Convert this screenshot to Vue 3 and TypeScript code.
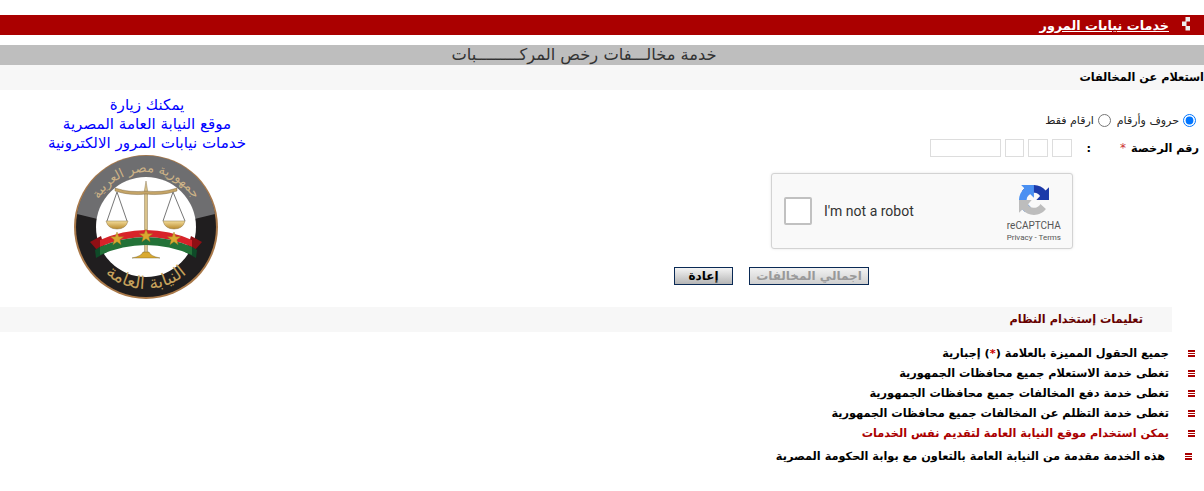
<script setup lang="ts">
interface Note {
  text: string
  red?: boolean
}

const notes: Note[] = [
  { text: 'تغطى خدمة الاستعلام جميع محافظات الجمهورية' },
  { text: 'تغطى خدمة دفع المخالفات جميع محافظات الجمهورية' },
  { text: 'تغطى خدمة التظلم عن المخالفات جميع محافظات الجمهورية' },
  { text: 'يمكن استخدام موقع النيابة العامة لتقديم نفس الخدمات', red: true },
]

// right to left, as the boxes stand on the page
const plateBoxes = [20, 20, 19, 71]
</script>

<template>
  <div class="page">
    <header class="topbar">
      <svg class="topbar-icon" width="8" height="14" viewBox="0 0 8 14">
        <path d="M3.500 0H8v4.500H3.500zM0 4.500h4.500V9H0zM3.500 9H8v4.500H3.500z" fill="#eee" />
      </svg>
      <a class="topbar-link">خدمات نيابات المرور</a>
    </header>

    <h1 class="title">خدمة مخالـــفات رخص المركـــــــــبات</h1>
    <h2 class="subtitle">استعلام عن المخالفات</h2>

    <main class="content">
      <section class="form">
        <div class="radios">
          <label class="radio"><input type="radio" name="kind" checked />حروف وأرقام</label>
          <label class="radio"><input type="radio" name="kind" />ارقام فقط</label>
        </div>

        <div class="plate">
          <span class="plate-label">رقم الرخصة</span>
          <span class="star">*</span>
          <span class="colon">:</span>
          <div class="plate-inputs">
            <input v-for="(w, i) in plateBoxes" :key="i" class="plate-input" :style="{ width: w + 'px' }" />
          </div>
        </div>

        <div class="captcha">
          <span class="captcha-check"></span>
          <span class="captcha-text">I'm not a robot</span>
          <div class="captcha-brand">
            <svg width="30" height="30" viewBox="0 0 64 64">
              <path d="M64 32l-.03-1.400V4.700l-7.160 7.160C50.950 4.670 42 .1 32.050.1 21.650.1 12.430 5.050 6.590 12.730l11.740 11.860a15.550 15.550 0 0 1 4.750-5.330c2.050-1.600 4.950-2.910 8.970-2.910.480 0 .86.060 1.130.160 4.980.390 9.290 3.140 11.830 7.120L37 32z" fill="#1c3aa9" />
              <path d="M31.860.1l-1.370.03H4.590l7.160 7.160C4.580 13.150 0 22.060 0 32.050c0 10.400 4.960 19.620 12.640 25.460l11.860-11.740a15.550 15.550 0 0 1-5.330-4.750c-1.600-2.050-2.910-4.950-2.910-8.970 0-.480.060-.860.160-1.130.390-4.980 3.140-9.290 7.120-11.830l8.310 8.310z" fill="#4a90f2" />
              <path d="M0 32l.03 1.400v25.900l7.160-7.160c5.860 7.170 14.770 11.750 24.760 11.750 10.400 0 19.620-4.960 25.460-12.640L45.670 40.400a15.550 15.550 0 0 1-4.750 5.330c-2.050 1.600-4.950 2.910-8.970 2.910-.480 0-.860-.060-1.130-.160-4.980-.390-9.290-3.140-11.830-7.120L27 32z" fill="#bdbdbd" />
            </svg>
            <span class="captcha-name">reCAPTCHA</span>
            <span class="captcha-links">Privacy - Terms</span>
          </div>
        </div>

        <div class="actions">
          <button class="btn btn-off" disabled>اجمالي المخالفات</button>
          <button class="btn">إعادة</button>
        </div>
      </section>

      <aside class="visit">
        <a>يمكنك زيارة</a>
        <a>موقع النيابة العامة المصرية</a>
        <a>خدمات نيابات المرور الالكترونية</a>
        <svg class="seal" width="146" height="146" viewBox="0 0 146 146">
          <defs>
            <path id="arc-top" d="M18 73a55 55 0 0 1 110 0" />
            <path id="arc-bottom" d="M11 73a62 62 0 0 0 124 0" />
            <linearGradient id="gold" x1="0" x2="0" y1="0" y2="1">
              <stop offset="0" stop-color="#f3dc9a" />
              <stop offset="1" stop-color="#b98a2c" />
            </linearGradient>
            <polygon id="star" points="0,-7 1.800,-2.200 6.700,-2.200 2.800,.8 4.100,5.700 0,2.700 -4.100,5.700 -2.800,.8 -6.700,-2.200 -1.800,-2.200" fill="#d9a92f" stroke="#9a7a20" stroke-width=".4" />
          </defs>
          <circle cx="73" cy="73" r="72" fill="#a9794a" />
          <circle cx="73" cy="73" r="70" fill="#201e1f" />
          <path d="M4 60A70 70 0 0 1 142 60L121.500 65A50 50 0 0 0 24.500 65z" fill="#6e6e70" />
          <circle cx="73" cy="73" r="50" fill="#fff" />
          <text class="seal-text" fill="#cdb387" font-size="13"><textPath href="#arc-top" startOffset="50%" text-anchor="middle">جمهورية مصر العربية</textPath></text>
          <text class="seal-text" fill="#c6a15b" font-size="17.500"><textPath href="#arc-bottom" startOffset="50%" text-anchor="middle">النيابة العامة</textPath></text>

          <path d="M73 27l1.500 9v63h-3V36z" fill="#d9c28a" stroke="#7a6540" stroke-width=".4" />
          <path d="M59 104q10-2 11-6h6q1 4 11 6z" fill="#d9a92f" stroke="#6b5520" stroke-width=".4" />
          <path d="M42 34q15 5 31 3q16 2 31-3v3q-15 5-31 3q-16 2-31-3z" fill="#c4a467" stroke="#6e5a38" stroke-width=".4" />
          <path d="M44 38L34 67M44 38l10 29M100 38L90 67M100 38l12 29" stroke="#777" fill="none" />
          <path d="M33 67h22q-2 8-11 8t-11-8zM90 67h22q-2 8-11 8t-11-8z" fill="url(#gold)" stroke="#8a7446" stroke-width=".5" />

          <path d="M17 88l11-6 3 10-7 4z" fill="#8f0f14" />
          <path d="M129 88l-11-6-3 10 7 4z" fill="#8f0f14" />
          <path d="M22 96l9-6 3 8-11 6z" fill="#0f4a28" />
          <path d="M124 96l-9-6-3 8 11 6z" fill="#0f4a28" />
          <path d="M27 86Q73 66 119 86V93Q73 73 27 93z" fill="#d8232a" />
          <path d="M27 93Q73 73 119 93V101Q73 81 27 101z" fill="#237238" />
          <use href="#star" x="44" y="85" />
          <use href="#star" x="73" y="82" />
          <use href="#star" x="101" y="85" />
        </svg>
      </aside>
    </main>

    <section class="help">
      <h3 class="help-title"><span>تعليمات إستخدام النظام</span></h3>
      <ul class="notes">
        <li class="note">
          <span class="bullet"></span>
          <span>جميع الحقول المميزة بالعلامة (<b class="star-inline">*</b>) إجبارية</span>
        </li>
        <li v-for="n in notes" :key="n.text" class="note" :class="{ red: n.red }">
          <span class="bullet"></span>
          <span>{{ n.text }}</span>
        </li>
        <li class="note last">
          <span class="bullet"></span>
          <span>هذه الخدمة مقدمة من النيابة العامة بالتعاون مع بوابة الحكومة المصرية</span>
        </li>
      </ul>
    </section>
  </div>
</template>

<style>
html,
body {
  margin: 0;
  background: #fff;
}
</style>

<style scoped>
.page {
  direction: rtl;
  box-sizing: border-box;
  height: 491px;
  padding-top: 15px;
  overflow: hidden;
  font-family: "DejaVu Sans", sans-serif;
  color: #000;
}

.topbar {
  height: 20px;
  background: #a00;
  display: flex;
  align-items: center;
  gap: 13px;
  padding-right: 14px;
  color: #fff;
}

.topbar-icon {
  margin-bottom: 2px;
}

.topbar-link {
  color: #fff;
  font-size: 12.800px;
  font-weight: bold;
  text-decoration: underline;
}

.title {
  margin: 10px 0 0;
  height: 20px;
  line-height: 20px;
  background: #bebebe;
  color: #333;
  font-size: 16.300px;
  font-weight: normal;
  text-align: center;
  padding-right: 36px;
}

.subtitle {
  margin: 0;
  height: 25px;
  line-height: 25px;
  background: #f7f7f7;
  font-size: 11.300px;
  font-weight: bold;
}

.content {
  display: flex;
  justify-content: space-between;
  height: 217px;
}

.form {
  width: 540px;
}

.radios {
  display: flex;
  gap: 6px;
  height: 20px;
  margin-top: 20px;
  font-size: 11px;
  color: #222;
  padding-right: 8px;
}

.radio {
  display: flex;
  align-items: center;
  gap: 4px;
}

.radio input {
  margin: 0;
  width: 13px;
  height: 13px;
}

.plate {
  display: flex;
  align-items: center;
  height: 18px;
  margin-top: 9px;
  padding-right: 5px;
  font-size: 11.300px;
  font-weight: bold;
}

.plate-label {
  width: 73px;
  white-space: nowrap;
}

.star {
  color: #c33;
  font-size: 12px;
  font-weight: normal;
  width: 35px;
}

.colon {
  width: 19px;
}

.plate-inputs {
  display: flex;
  gap: 4px;
}

.plate-input {
  box-sizing: border-box;
  height: 18px;
  border: 1px solid #ddd;
  padding: 0;
}

.captcha {
  direction: ltr;
  box-sizing: border-box;
  width: 302px;
  height: 76px;
  margin: 16px 131px 0 0;
  border: 1px solid #d3d3d3;
  border-radius: 3px;
  background: #f9f9f9;
  box-shadow: 0 0 3px rgba(0, 0, 0, 0.1);
  display: flex;
  align-items: center;
  font-family: Roboto, sans-serif;
  padding: 0 11px 0 12px;
}

.captcha-check {
  box-sizing: border-box;
  width: 28px;
  height: 28px;
  border: 2px solid #c1c1c1;
  border-radius: 2px;
  background: #fff;
}

.captcha-text {
  margin-left: 12px;
  font-size: 14px;
  color: #333;
  flex: 1;
}

.captcha-brand {
  align-self: flex-start;
  padding-top: 11px;
  display: flex;
  flex-direction: column;
  align-items: center;
  color: #555;
}

.captcha-name {
  font-size: 10px;
  line-height: 12px;
  margin-top: 5px;
}

.captcha-links {
  font-size: 8px;
  line-height: 12px;
}

.actions {
  display: flex;
  gap: 16px;
  margin: 18px 335px 0 0;
}

.btn {
  box-sizing: border-box;
  height: 18px;
  width: 59px;
  padding: 0;
  border: 1px solid #0a2a55;
  background: linear-gradient(#f4f4f4, #b5b5b5);
  font-family: inherit;
  font-size: 12px;
  font-weight: bold;
  color: #000;
}

.btn-off {
  width: 120px;
  color: #999;
  background: linear-gradient(#f2f2f2, #cfcfcf);
}

.visit {
  width: 294px;
  padding-top: 6px;
  display: flex;
  flex-direction: column;
  align-items: center;
  font-size: 15.100px;
  line-height: 19px;
  color: #00f;
}

.seal {
  margin: 1px 3px 0 0;
}

.seal-text {
  font-family: "DejaVu Sans", sans-serif;
}

.help-title {
  margin: 0 32px 0 0;
  height: 25px;
  line-height: 25px;
  background: #f7f7f7;
  font-size: 11.300px;
  font-weight: bold;
  color: #600;
}

.help-title span {
  margin-right: 29px;
}

.notes {
  list-style: none;
  margin: 11px 0 0;
  padding: 0;
}

.note {
  display: flex;
  align-items: center;
  gap: 19px;
  height: 20px;
  padding-right: 9px;
  font-size: 11.300px;
  font-weight: bold;
}

.note.red {
  color: #a00;
}

.note.last {
  margin-top: 3px;
  gap: 20px;
  padding-right: 12px;
}

.bullet {
  box-sizing: border-box;
  width: 7px;
  height: 7px;
  flex: none;
  border-top: 2px solid #a00;
  border-bottom: 2px solid #a00;
  background: linear-gradient(#a00, #a00) center / 100% 1px no-repeat;
}

.star-inline {
  color: #c00;
}
</style>
